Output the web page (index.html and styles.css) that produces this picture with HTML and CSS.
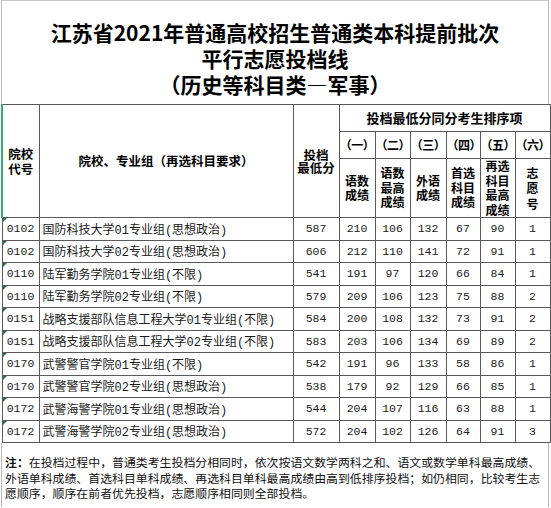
FILE: index.html
```html
<!DOCTYPE html>
<html lang="zh-CN">
<head>
<meta charset="utf-8">
<title>江苏省2021年普通高校招生普通类本科提前批次平行志愿投档线</title>
<link rel="stylesheet" href="styles.css">
</head>
<body>
<div class="sheet">
  <div class="title">
    <div>江苏省2021年普通高校招生普通类本科提前批次</div>
    <div>平行志愿投档线</div>
    <div>（历史等科目类—军事）</div>
  </div>
  <table class="grid">
    <colgroup>
      <col class="c-code"><col class="c-name"><col class="c-score">
      <col class="c-a"><col class="c-b"><col class="c-c"><col class="c-d"><col class="c-e"><col class="c-f">
    </colgroup>
    <thead>
      <tr class="h1">
        <th rowspan="3" class="hcode">院校<br>代号</th>
        <th rowspan="3">院校、专业组（再选科目要求）</th>
        <th rowspan="3" class="hscore">投档<br>最低分</th>
        <th colspan="6">投档最低分同分考生排序项</th>
      </tr>
      <tr class="h2">
        <th>（一）</th><th>（二）</th><th>（三）</th><th>（四）</th><th>（五）</th><th>（六）</th>
      </tr>
      <tr class="h3">
        <th>语数<br>成绩</th>
        <th>语数<br>最高<br>成绩</th>
        <th>外语<br>成绩</th>
        <th>首选<br>科目<br>成绩</th>
        <th>再选<br>科目<br>最高<br>成绩</th>
        <th class="vol">志<br>愿<br>号</th>
      </tr>
    </thead>
    <tbody>
      <tr><td class="code">0102</td><td class="name">国防科技大学01专业组(思想政治)</td><td>587</td><td>210</td><td>106</td><td>132</td><td>67</td><td>90</td><td>1</td></tr>
      <tr><td class="code">0102</td><td class="name">国防科技大学02专业组(思想政治)</td><td>606</td><td>212</td><td>110</td><td>141</td><td>72</td><td>91</td><td>1</td></tr>
      <tr><td class="code">0110</td><td class="name">陆军勤务学院01专业组(不限)</td><td>541</td><td>191</td><td>97</td><td>120</td><td>66</td><td>84</td><td>1</td></tr>
      <tr><td class="code">0110</td><td class="name">陆军勤务学院02专业组(不限)</td><td>579</td><td>209</td><td>106</td><td>123</td><td>75</td><td>88</td><td>2</td></tr>
      <tr><td class="code">0151</td><td class="name">战略支援部队信息工程大学01专业组(不限)</td><td>584</td><td>200</td><td>108</td><td>132</td><td>73</td><td>91</td><td>2</td></tr>
      <tr><td class="code">0151</td><td class="name">战略支援部队信息工程大学02专业组(不限)</td><td>583</td><td>203</td><td>106</td><td>134</td><td>69</td><td>89</td><td>2</td></tr>
      <tr><td class="code">0170</td><td class="name">武警警官学院01专业组(不限)</td><td>542</td><td>191</td><td>96</td><td>133</td><td>58</td><td>86</td><td>1</td></tr>
      <tr><td class="code">0170</td><td class="name">武警警官学院02专业组(思想政治)</td><td>538</td><td>179</td><td>92</td><td>129</td><td>66</td><td>85</td><td>1</td></tr>
      <tr><td class="code">0172</td><td class="name">武警海警学院01专业组(思想政治)</td><td>544</td><td>204</td><td>107</td><td>116</td><td>63</td><td>88</td><td>1</td></tr>
      <tr><td class="code">0172</td><td class="name">武警海警学院02专业组(思想政治)</td><td>572</td><td>204</td><td>102</td><td>126</td><td>64</td><td>91</td><td>3</td></tr>
    </tbody>
  </table>
  <div class="note">
    <div><b>注：</b>在投档过程中，普通类考生投档分相同时，依次按语文数学两科之和、语文或数学单科最高成绩、</div>
    <div>外语单科成绩、首选科目单科成绩、再选科目单科最高成绩由高到低排序投档；如仍相同，比较考生志</div>
    <div>愿顺序，顺序在前者优先投档，志愿顺序相同则全部投档。</div>
  </div>
</div>
</body>
</html>
```
FILE: styles.css
```css
html, body {
  margin: 0;
  padding: 0;
  background: #ffffff;
}
body {
  font-family: "Noto Sans CJK SC", sans-serif;
  color: #111;
  width: 551px;
  height: 508px;
  overflow: hidden;
}
.sheet {
  width: 548px;
  margin-left: 1px;
}
.title {
  height: 104px;
  box-sizing: border-box;
  padding-top: 18px;
  border-top: 1px solid #c8c8c8;
  border-left: 1px solid #b8b8b8;
  border-right: 1px solid #b8b8b8;
  text-align: center;
  font-size: 21px;
  font-weight: bold;
  line-height: 26px;
  color: #000;
}
.grid {
  border-collapse: collapse;
  table-layout: fixed;
  width: 548px;
}
.c-code { width: 37px; }
.c-name { width: 254px; }
.c-score { width: 46px; }
.c-a { width: 36px; }
.c-b { width: 35px; }
.c-c { width: 36px; }
.c-d { width: 34px; }
.c-e { width: 35px; }
.c-f { width: 35px; }
.grid th, .grid td {
  border: 1px solid #5a5a5a;
  padding: 0;
  text-align: center;
  vertical-align: middle;
  overflow: hidden;
  white-space: nowrap;
}
.grid th {
  font-weight: bold;
  font-size: 12.5px;
  line-height: 14.5px;
  color: #000;
}
.grid thead tr.h1 { height: 27px; }
.grid thead tr.h2 { height: 27px; }
.grid thead tr.h3 { height: 59px; }
.grid th.hcode { border-left: 2px solid #3aa878; line-height: 15px; }
.grid th.hscore { line-height: 13.5px; }
.grid tr.h1 th[colspan] { font-size: 13px; }
.grid tr.h2 th { font-size: 12px; letter-spacing: -0.5px; }
.grid tr.h3 th { font-size: 12px; }
.grid th.vol { line-height: 15.5px; }
.grid tbody tr { height: 22.5px; }
.grid td {
  font-family: "Liberation Mono", "Noto Sans CJK SC", monospace;
  font-size: 11.5px;
  color: #1a1a1a;
}
.grid td.code {
  position: relative;
  font-size: 11.5px;
}
.grid td.code::before {
  content: "";
  position: absolute;
  left: 0;
  top: 0;
  border-top: 4px solid #1f7a3c;
  border-right: 4px solid transparent;
}
.grid td.name {
  text-align: left;
  padding-left: 3px;
  font-size: 12px;
}
.note {
  height: 64px;
  box-sizing: border-box;
  padding: 11px 0 0 3px;
  border-left: 1px solid #b8b8b8;
  border-right: 1px solid #b8b8b8;
  font-size: 11.9px;
  line-height: 15.5px;
  white-space: nowrap;
  color: #111;
}
.note b { font-weight: bold; }
```
